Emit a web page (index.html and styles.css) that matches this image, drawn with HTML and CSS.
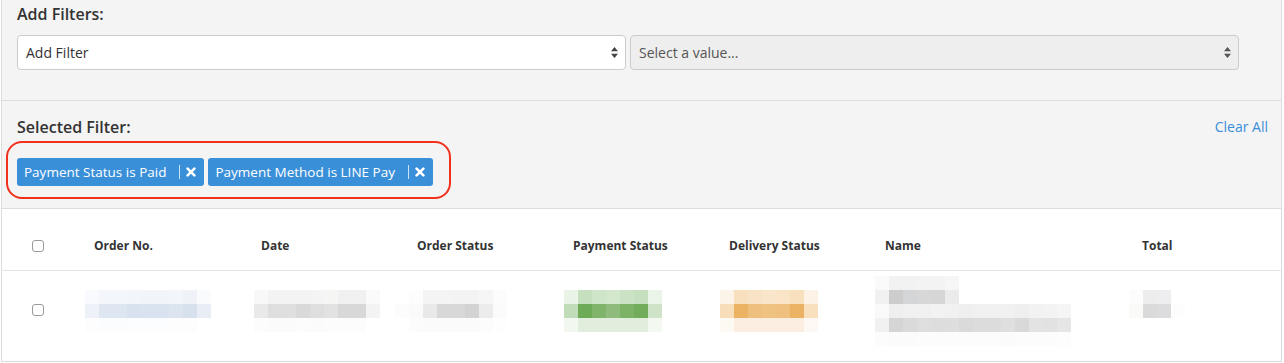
FILE: index.html
```html
<!DOCTYPE html>
<html lang="en">
<head>
    <meta charset="UTF-8">
    <meta name="viewport" content="width=device-width, initial-scale=1.0">
    <title>Orders</title>
    <link rel="stylesheet" href="styles.css">
</head>
<body>
<div class="page-box">
	<section class="filter-box">
		<div class="box-title">Add Filters:</div>
		<div class="filter-row">
			<div class="select-box">
				<span class="select-text">Add Filter</span>
				<svg class="select-arrow" width="7" height="11" viewBox="0 0 7 11"><path d="M3.5 0L7 4.3H0z M3.5 11L0 6.7h7z" fill="#444"/></svg>
			</div>
			<div class="select-box is-disabled">
				<span class="select-text">Select a value...</span>
				<svg class="select-arrow" width="7" height="11" viewBox="0 0 7 11"><path d="M3.5 0L7 4.3H0z M3.5 11L0 6.7h7z" fill="#555"/></svg>
			</div>
		</div>
	</section>
	<section class="selected-box">
		<div class="selected-head">
			<div class="box-title">Selected Filter:</div>
			<a class="clear-link">Clear All</a>
		</div>
		<div class="mark-box">
			<span class="tag-item">
				<span class="tag-name">Payment Status is Paid</span>
				<span class="tag-line"></span>
				<svg class="tag-close" width="10" height="10" viewBox="0 0 10 10"><path d="M1.6 1.6L8.4 8.4M8.4 1.6L1.6 8.4" stroke="#fff" stroke-width="2.6" stroke-linecap="round"/></svg>
			</span>
			<span class="tag-item">
				<span class="tag-name">Payment Method is LINE Pay</span>
				<span class="tag-line"></span>
				<svg class="tag-close" width="10" height="10" viewBox="0 0 10 10"><path d="M1.6 1.6L8.4 8.4M8.4 1.6L1.6 8.4" stroke="#fff" stroke-width="2.6" stroke-linecap="round"/></svg>
			</span>
		</div>
	</section>
	<section class="table-box">
		<div class="table-row table-head">
			<div class="cell"><span class="check-box"></span></div>
			<div class="cell">Order No.</div>
			<div class="cell">Date</div>
			<div class="cell">Order Status</div>
			<div class="cell">Payment Status</div>
			<div class="cell">Delivery Status</div>
			<div class="cell">Name</div>
			<div class="cell">Total</div>
		</div>
		<div class="table-row table-body">
			<div class="cell"><span class="check-box is-row"></span></div>
			<div class="cell"><div class="blur" data-key="order"></div></div>
			<div class="cell"><div class="blur is-date" data-key="date"></div></div>
			<div class="cell"><div class="blur is-wide" data-key="status"></div></div>
			<div class="cell"><div class="blur" data-key="pay"></div></div>
			<div class="cell"><div class="blur" data-key="delivery"></div></div>
			<div class="cell"><div class="blur is-name" data-key="name"></div></div>
			<div class="cell"><div class="blur is-total" data-key="total"></div></div>
		</div>
	</section>
</div>

<script>
	// blurred cell colours, one array per row
	var blurData = {
		order: [
			['#f8fafd','#f3f6fa','#f3f6fa','#f2f5fa','#f1f4f9','#f1f4f9','#f2f5f9','#eff3f8','#f9fbfd'],
			['#eef2f8','#dde6f1','#dde6f1','#d8e2ee','#d9e3ef','#d9e3ef','#dbe4ef','#d7e1ee','#e9eef6'],
			['#fdfdfe','#fbfcfe','#fbfcfe','#fcfdfe','#fcfdfe','#fcfdfe','#fdfdfe','#fdfdfe','#ffffff']
		],
		date: [
			['#f8f8f8','#f3f3f3','#f3f3f3','#f3f3f3','#f4f4f4','#f5f5f3','#f0f0f0','#f0f0f0','#fafafa'],
			['#e9e9e9','#dedede','#dfdfdf','#d9d9d9','#dedede','#e2e2e2','#d8d8d8','#d8d8d8','#f2f3f2'],
			['#fcfcfc','#fbfbfb','#fbfbfb','#fcfcfc','#fbfbfb','#fcfcfc','#fcfcfc','#fcfcfc','#ffffff']
		],
		status: [
			['#ffffff','#fdfdfd','#f4f4f4','#f4f4f4','#f3f3f3','#f3f3f3','#f6f6f6','#fcfcfc'],
			['#fcfcfc','#fafafa','#e9e9e9','#d8d8d8','#d8d8d8','#d3d3d3','#ececec','#fbfbfb'],
			['#ffffff','#fcfcfc','#fbfbfb','#fbfbfb','#fbfbfb','#fbfbfb','#fcfcfc','#fefefe']
		],
		pay: [
			['#e9f3e6','#c6dfbf','#cfe5c9','#d2e7cc','#cbe2c4','#c6dfbf','#ebf4e8'],
			['#c0dcb8','#6eab57','#7fb46a','#8fbc7d','#7cb366','#71ad5b','#cfe3c8'],
			['#f2f8f0','#e2eedd','#e2eedd','#e2eedd','#e2eedd','#e2eedd','#f3f8f1']
		],
		delivery: [
			['#fcf3e9','#f8dfbe','#f9e3c6','#f9e5ca','#f9e4c8','#f8dfbe','#fcf2e6'],
			['#f8ddb9','#ebb261','#efbf7d','#f0c282','#efc07f','#ebb263','#f8dfbd'],
			['#fdf9f3','#fbede0','#fbede0','#fbeee1','#fbeee1','#fbede0','#fdf8f3']
		],
		name: [
			['#fafafa','#f2f2f2','#f2f2f2','#f3f3f3','#f3f3f3','#f6f6f6','#fff','#fff','#fff','#fff','#fff','#fff','#fff','#fff'],
			['#f1f1f1','#cdcdcd','#d4d5d7','#d7d7d7','#d6d6d6','#ebebeb','#fff','#fff','#fff','#fff','#fff','#fff','#fff','#fff'],
			['#f9f9f9','#efefef','#f0f0f0','#f0f0f0','#f2f2f2','#f1f1f1','#efefef','#f0f0f0','#f0f0f0','#f1f1f1','#efefef','#f2f2f2','#f3f3f3','#f5f5f5'],
			['#f1f1f1','#d5d5d5','#dadada','#dedede','#dddddd','#dedede','#dadada','#dcdcdc','#dcdcdc','#dfdfdf','#d9d9d9','#e3e3e3','#e2e2e2','#e6e6e6'],
			['#fcfcfc','#fbfbfb','#fbfbfb','#fcfcfc','#fcfcfc','#fcfcfc','#fcfcfc','#fcfcfc','#fcfcfc','#fbfbfb','#fcfcfc','#fcfcfc','#fcfcfc','#fdfdfd']
		],
		total: [
			['#fcfcfc','#ededed','#eeeef0','#ffffff'],
			['#fafaf9','#dadada','#dcdcde','#fdfdfd']
		]
	};

	var blurBoxes = document.querySelectorAll('.blur');
	for(var i = 0; i < blurBoxes.length; i++){
		var rows = blurData[blurBoxes[i].getAttribute('data-key')];
		blurBoxes[i].style.gridTemplateColumns = 'repeat(' + rows[0].length + ', 14px)';
		for(var r = 0; r < rows.length; r++){
			for(var c = 0; c < rows[r].length; c++){
				var dot = document.createElement('span');
				dot.style.backgroundColor = rows[r][c];
				blurBoxes[i].appendChild(dot);
			}
		}
	}
</script>
</body>
</html>
```

FILE: styles.css
```css
*{
	padding:0;margin:0;box-sizing:border-box;
}
body{font-family:'Open Sans','Liberation Sans',sans-serif;font-size:13px;line-height:18px;color:#333;background:#fff;}

.page-box{
	margin:0 2px 0 1px;
	border:1px solid #ddd;
	border-top:0;
}

.filter-box{
	background:#f4f4f4;
	padding:4px 15px 30px 15px;
	border-bottom:1px solid #ddd;
}
.box-title{
	font-size:16px;
	line-height:20px;
	font-weight:600;
	color:#333;
}
.filter-row{
	display:flex;
	gap:4px;
	margin-top:11px;
}
.select-box{
	width:609px;
	height:35px;
	display:flex;
	align-items:center;
	justify-content:space-between;
	padding:0 7px 0 8px;
	background:#fff;
	border:1px solid #ccc;
	border-radius:4px;
	font-size:14px;
	color:#333;
}
.select-box.is-disabled{background:#eee;color:#555;}
.select-arrow{display:block;}

.selected-box{
	background:#f4f4f4;
	padding:16px 13px 9px 15px;
	border-bottom:1px solid #ddd;
}
.selected-head{
	display:flex;
	justify-content:space-between;
	align-items:center;
}
.clear-link{
	font-size:14px;
	color:#3a8ddb;
	cursor:pointer;
}
.mark-box{
	display:inline-flex;
	gap:4px;
	margin:4px 0 0 -11px;
	padding:15px 16px 11px 9px;
	border:2px solid #f3301c;
	border-radius:16px;
}
.tag-item{
	display:flex;
	align-items:center;
	height:28px;
	padding:0 8px 0 7px;
	background:#3a8fd9;
	border-radius:3px;
	color:#fff;
	font-size:13.5px;
}
.tag-line{
	width:1px;
	height:14px;
	margin:0 6px 0 13px;
	background:rgba(255,255,255,0.75);
}
.tag-item .tag-close{display:block;}

.table-box{background:#fff;}
.table-row{
	display:grid;
	grid-template-columns:62px 167px 156px 156px 156px 156px 257px 1fr;
	padding-left:30px;
}
.table-head{
	padding-top:28px;
	padding-bottom:15px;
	border-bottom:1px solid #e3e3e3;
	font-size:12px;
	font-weight:700;
	align-items:center;
}
.table-body{
	padding-top:5px;
	padding-bottom:15px;
	align-items:start;
}
.check-box{
	display:block;
	width:12px;
	height:12px;
	border:1px solid #999;
	border-radius:3px;
	background:#fff;
}
.check-box.is-row{margin-top:28px;}

.blur{
	display:grid;
	grid-auto-rows:14px;
	margin:14px 0 0 -9px;
}
.blur.is-date{margin-left:-7px;}
.blur.is-wide{margin-left:-22px;}
.blur.is-name{margin-top:0;margin-left:-10px;}
.blur.is-total{margin-left:-13px;}
```
